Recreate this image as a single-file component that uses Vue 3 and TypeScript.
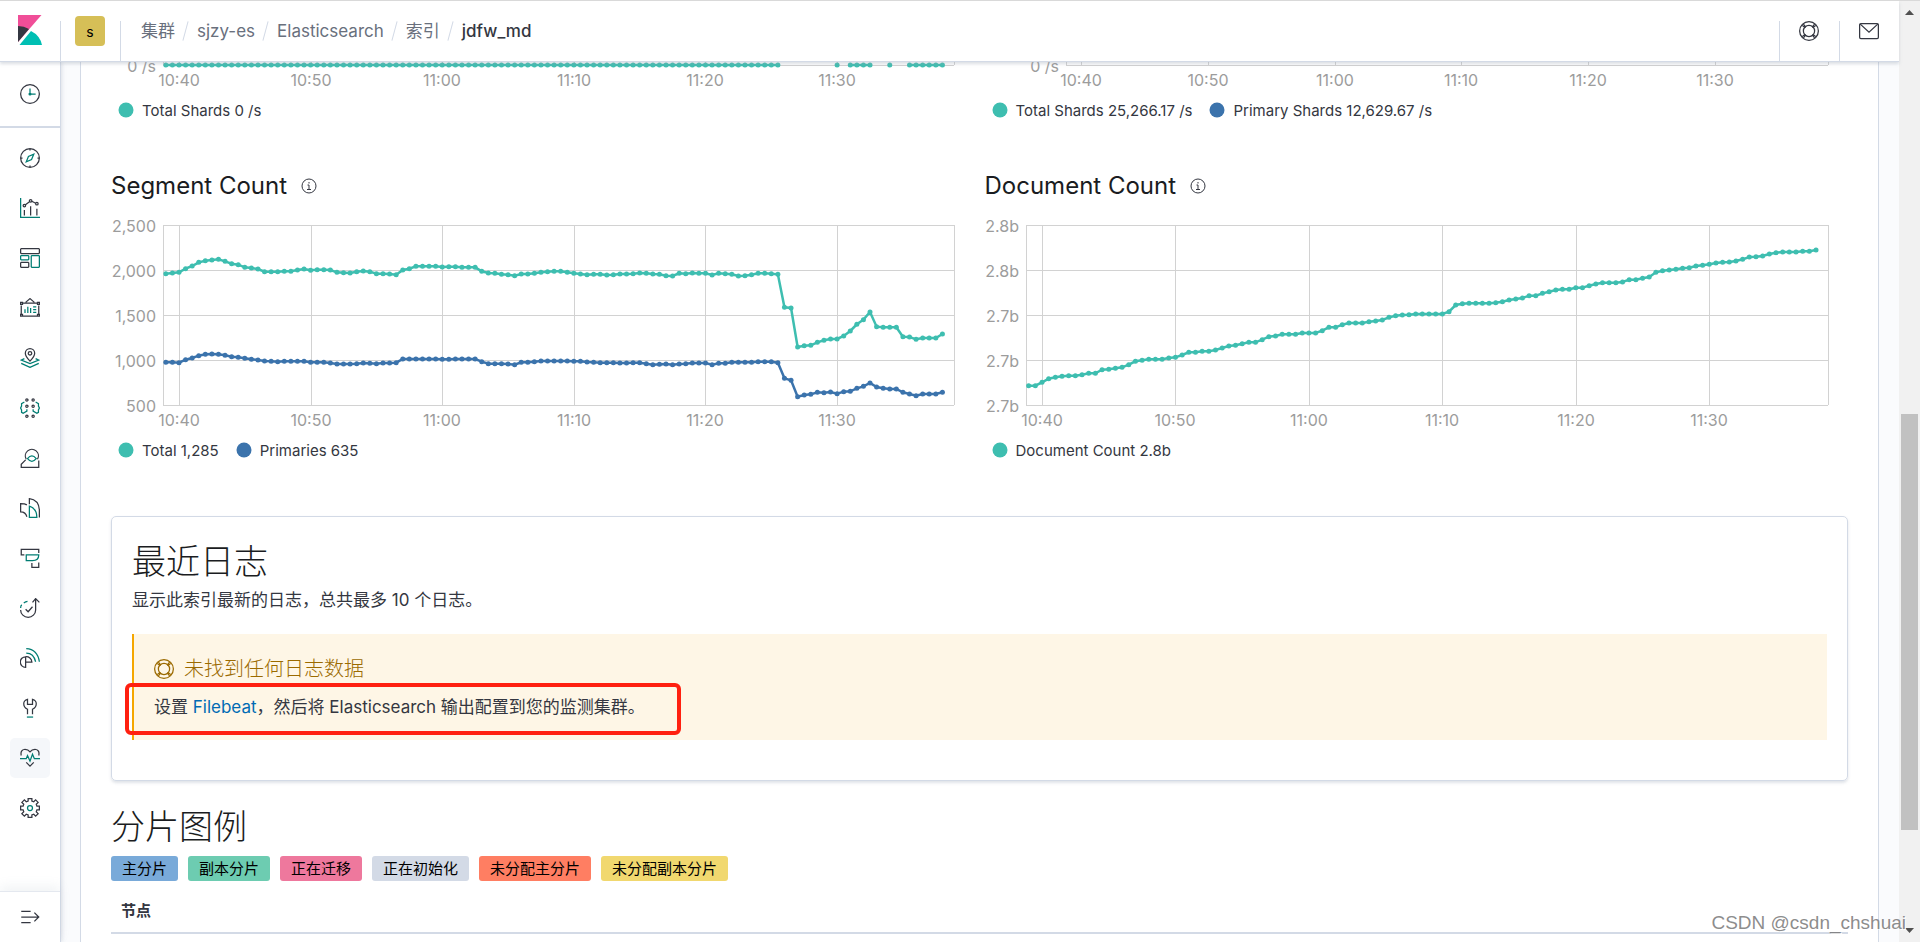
<script setup lang="ts">
import { computed, onBeforeUnmount, onMounted, ref } from 'vue'

interface Series {
  label: string
  color: string
  levels: (number | null)[]
}
interface Chart {
  id: string
  title?: string
  gutter: number
  plotHeight: number
  yLabels: string[]
  firstTick: number
  series: Series[]
}
interface NavIcon {
  name: string
  active?: boolean
  dark: string
  teal: string
}

const TEAL = '#3ebeb0'
const BLUE = '#3b73ac'
const SAMPLES = 119
const SCALE = 540
const TOP_PAD = 9
const BOTTOM_PAD = 31

const times = ['10:40', '10:50', '11:00', '11:10', '11:20', '11:30']

const idle: (number | null)[] = Array.from({ length: SAMPLES }, (_, i) =>
  i <= 93 || i === 102 || (i >= 104 && i <= 107) || i === 110 || i >= 113 ? 0 : null,
)

/* Levels run from 196 (top of the scale) down to 736 (bottom of the scale). */
const level = (values: number[]) => values.map((v) => 736 - v)

const total = level([
  342, 340, 338, 327, 319, 308, 303, 301, 299, 305, 312, 315, 323, 325, 328, 336, 336, 336, 335, 335,
  331, 328, 332, 330, 330, 331, 338, 339, 340, 336, 334, 336, 342, 342, 343, 345, 331, 327, 320, 320,
  320, 320, 322, 321, 321, 323, 323, 323, 335, 340, 341, 344, 345, 348, 343, 343, 341, 338, 336, 335,
  335, 338, 341, 343, 345, 344, 344, 346, 345, 343, 343, 342, 340, 341, 343, 344, 348, 349, 341, 342,
  340, 341, 341, 346, 341, 342, 344, 349, 348, 345, 341, 341, 342, 344, 443, 445, 562, 558, 557, 548,
  542, 538, 538, 529, 514, 494, 480, 457, 501, 503, 503, 503, 531, 532, 539, 535, 535, 535, 523,
])
const primaries = level([
  608, 608, 609, 600, 595, 588, 584, 583, 584, 587, 591, 593, 596, 599, 601, 604, 605, 606, 605, 605,
  605, 605, 608, 608, 608, 610, 613, 613, 613, 612, 610, 611, 612, 610, 610, 609, 598, 598, 598, 598,
  598, 598, 599, 599, 598, 598, 598, 598, 606, 612, 612, 612, 613, 615, 608, 608, 606, 604, 604, 604,
  604, 604, 605, 605, 607, 608, 609, 609, 609, 610, 610, 609, 609, 612, 615, 614, 613, 615, 613, 612,
  610, 610, 610, 615, 611, 611, 608, 608, 608, 608, 606, 606, 606, 609, 656, 662, 711, 706, 704, 698,
  699, 697, 702, 696, 695, 686, 680, 670, 682, 686, 688, 688, 698, 703, 708, 703, 703, 703, 698,
])
const documents = level([
  678, 678, 668, 657, 653, 650, 648, 648, 645, 641, 641, 630, 629, 626, 623, 615, 605, 602, 599, 599,
  599, 595, 593, 586, 578, 578, 575, 575, 571, 565, 559, 557, 552, 548, 548, 540, 531, 529, 524, 524,
  524, 520, 520, 520, 513, 503, 503, 495, 490, 490, 490, 486, 484, 481, 473, 468, 466, 465, 463, 463,
  463, 463, 463, 456, 436, 432, 431, 431, 431, 431, 429, 426, 421, 418, 415, 408, 408, 401, 396, 391,
  389, 389, 384, 384, 378, 373, 369, 369, 369, 367, 360, 360, 356, 352, 338, 333, 331, 329, 326, 324,
  319, 317, 314, 310, 308, 307, 304, 299, 292, 291, 289, 283, 279, 277, 277, 277, 275, 275, 271,
])

const charts: Chart[] = [
  {
    id: 'search-rate',
    gutter: 52,
    plotHeight: 0,
    yLabels: ['0 /s'],
    firstTick: 16,
    series: [{ label: 'Total Shards 0 /s', color: TEAL, levels: idle }],
  },
  {
    id: 'indexing-rate',
    gutter: 81,
    plotHeight: 0,
    yLabels: ['0 /s'],
    firstTick: 15,
    series: [
      { label: 'Total Shards 25,266.17 /s', color: TEAL, levels: [] },
      { label: 'Primary Shards 12,629.67 /s', color: BLUE, levels: [] },
    ],
  },
  {
    id: 'segments',
    title: 'Segment Count',
    gutter: 52,
    plotHeight: 180,
    yLabels: ['2,500', '2,000', '1,500', '1,000', '500'],
    firstTick: 16,
    series: [
      { label: 'Total 1,285', color: TEAL, levels: total },
      { label: 'Primaries 635', color: BLUE, levels: primaries },
    ],
  },
  {
    id: 'documents',
    title: 'Document Count',
    gutter: 41,
    plotHeight: 180,
    yLabels: ['2.8b', '2.8b', '2.7b', '2.7b', '2.7b'],
    firstTick: 16,
    series: [{ label: 'Document Count 2.8b', color: TEAL, levels: documents }],
  },
]

const grid = ref<HTMLElement | null>(null)
const columnWidth = ref(863)
let observer: ResizeObserver | undefined

function measure() {
  const first = grid.value?.firstElementChild
  if (first) columnWidth.value = first.clientWidth
}
onMounted(() => {
  measure()
  observer = new ResizeObserver(measure)
  if (grid.value) observer.observe(grid.value)
})
onBeforeUnmount(() => observer?.disconnect())

const drawn = computed(() =>
  charts.map((chart) => {
    const clipped = chart.plotHeight === 0
    const top = clipped ? 3 : TOP_PAD
    const bottom = top + chart.plotHeight
    const left = chart.gutter
    const right = columnWidth.value - 21
    const width = right - left
    const tickGap = width * 0.1664
    const step = tickGap / 20
    const start = left + chart.firstTick - step * 2
    const rows = chart.yLabels.length
    return {
      ...chart,
      left,
      right,
      bottom,
      frameTop: clipped ? -10 : top,
      height: bottom + BOTTOM_PAD,
      rows: chart.yLabels.map((text, i) => ({
        text,
        y: rows > 1 ? top + (chart.plotHeight * i) / (rows - 1) : bottom,
      })),
      ticks: times.map((text, i) => ({ text, x: Math.round(left + chart.firstTick + tickGap * i) })),
      lines: chart.series.map((s) => {
        const dots = s.levels.flatMap((v, i) =>
          v === null ? [] : [{ i, x: start + step * i, y: bottom - (v / SCALE) * chart.plotHeight }],
        )
        let previous = -2
        const path = dots
          .map((d) => {
            const cmd = d.i === previous + 1 ? 'L' : 'M'
            previous = d.i
            return `${cmd}${d.x.toFixed(2)} ${d.y.toFixed(2)}`
          })
          .join('')
        return { color: s.color, dots, path }
      }),
    }
  }),
)

const ring = (x: number, y: number, r: number) =>
  `M${x - r} ${y}a${r} ${r} 0 1 0 ${r * 2} 0a${r} ${r} 0 1 0 ${-r * 2} 0z`

const recent: NavIcon = {
  name: '最近查看',
  dark: ring(16, 16, 15),
  teal: 'M16 7v9h9' + ring(16, 16, 1.5),
}

const nav: NavIcon[] = [
  {
    name: 'Discover',
    dark: ring(16, 16, 15) + 'M16 1v3M16 28v3M1 16h3M28 16h3',
    teal: 'M22 10l-3.500 8.500L10 22l3.500-8.500z',
  },
  {
    name: 'Visualize',
    dark:
      ring(7, 12, 2) + ring(17, 4.5, 2) + ring(27, 9, 2) +
      'M8.700 10.700l6.500-4.800M19 5.300l6 3M7 19v9M17 13v15M27 17v11',
    teal: 'M1 0v31h31',
  },
  {
    name: 'Dashboard',
    dark: 'M2 1h28l1 1v6l-1 1H2L1 8V2zM2 23h11l1 1v6l-1 1H2l-1-1v-6z',
    teal: 'M2 12h11l1 1v5l-1 1H2l-1-1v-5zM19 12h11l1 1v17l-1 1H19l-1-1V13z',
  },
  {
    name: 'Canvas',
    dark:
      'M9 7l7-6 7 6M4 8h24M4 29h24M2 12v13M30 12v13M1 7h3v3H1zM28 7h3v3h-3zM1 26h3v3H1zM28 26h3v3h-3z',
    teal: 'M8 18v6M12.500 14v10M17 16v8M21 14h5M21 18.500h5M21 23h5',
  },
  {
    name: 'Maps',
    dark: 'M16 21c-4-4-7.500-8-7.500-12.500a7.500 7.500 0 0 1 15 0C23.500 13 20 17 16 21z' + ring(16, 8.5, 2.8),
    teal: 'M7 17l-5 2.500L16 25l14-5.500L25 17M2 24.500L16 31l14-6.500',
  },
  {
    name: 'Machine Learning',
    dark:
      ring(11, 3, 1.8) + ring(21, 3, 1.8) + ring(11, 13, 1.8) + ring(21, 13, 1.8) +
      ring(11, 29, 1.8) + ring(21, 29, 1.8),
    teal: 'M7 6.500L2.500 9v4L1 16l1.500 3v4L5 24.500 11 21v-3M25 6.500L29.500 9v4L31 16l-1.500 3v4L27 24.500 21 21v-3',
  },
  {
    name: 'Metrics',
    dark: 'M10 18a10.500 10.500 0 1 1 18 0M9 19L2 26v5h28V20',
    teal: 'M12 17q7-8.500 14 0q-7 8.500-14 0z',
  },
  {
    name: 'Logs',
    dark: 'M15 10V1q15 2 16 18v12M11 11Q8 9 1 9v13q8 0 10 8',
    teal: 'M15 13v18h12q0-14-12-18z',
  },
  {
    name: 'APM',
    dark: 'M7 11H2V2h28v6M19 24v7h11v-8',
    teal: 'M10 11h20q0 9-10 9H10z',
  },
  {
    name: 'Uptime',
    dark: 'M1 19a12 12 0 0 0 24 0V2M20 7l5-6 6 6M9 18l4 4 7-8',
    teal: 'M1 16q0-4 2-5M6 8q3-2 6-2.500',
  },
  {
    name: 'SIEM',
    dark: 'M9 14a8.500 8.500 0 0 0 0 17V14a9 9 0 0 1 10 8.500H9',
    teal: 'M10 8q12 0 15 14M10 1q18 1 21 21',
  },
  {
    name: 'Dev Tools',
    dark: 'M12 26v-8Q6 15 6 9q0-5 6-7v8h8V2q6 2 6 7 0 6-6 9v8',
    teal: 'M11 30.500h10',
  },
  {
    name: 'Stack Monitoring',
    active: true,
    dark: 'M2 12Q0 3 8 2q5 0 8 4 3-4 8-4 8 1 6 10M10 23l6 6 6-6',
    teal: 'M0 17h10l2-5 4 9 4-11 3 7h9',
  },
  {
    name: 'Management',
    dark:
      'M13 1h6v4l3 1 3-3 4 4-3 3 1 3h4v6h-4l-1 3 3 3-4 4-3-3-3 1v4h-6v-4l-3-1-3 3-4-4 3-3-1-3H1v-6h4l1-3-3-3 4-4 3 3 3-1z',
    teal: ring(16, 16, 4),
  },
]

const crumbs = ['集群', 'sjzy-es', 'Elasticsearch', '索引', 'jdfw_md']

const badges = [
  { text: '主分片', kind: 'primary' },
  { text: '副本分片', kind: 'replica' },
  { text: '正在迁移', kind: 'relocating' },
  { text: '正在初始化', kind: 'initializing' },
  { text: '未分配主分片', kind: 'unassigned-primary' },
  { text: '未分配副本分片', kind: 'unassigned-replica' },
]
</script>

<template>
  <div class="app">
    <div class="shell">
      <header class="header">
        <a class="logo" href="#" aria-label="Kibana">
          <svg width="24" height="30" viewBox="0 0 24 30">
            <path fill="#f04e98" d="M0 0v27L23.500 0z" />
            <path fill="#343741" d="M0 11v16l11-13Q6 11 0 11z" />
            <path fill="#00bfb3" d="M13 16L1.500 30H24Q22 20.500 13 16z" />
          </svg>
        </a>
        <div class="cell">
          <button class="space" type="button">s</button>
        </div>
        <nav class="crumbs" aria-label="breadcrumb">
          <template v-for="(crumb, i) in crumbs" :key="crumb">
            <span v-if="i > 0" class="slash"></span>
            <a v-if="i < crumbs.length - 1" href="#">{{ crumb }}</a>
            <span v-else class="current">{{ crumb }}</span>
          </template>
        </nav>
        <button class="cell" type="button" aria-label="Help">
          <svg width="20" height="20" viewBox="0 0 16 16" class="help">
            <circle cx="8" cy="8" r="7.5" />
            <circle cx="8" cy="8" r="4.500" />
            <path d="M3.500 2.500l2 2.500M2.500 3.500L5 5.500M12.500 2.500l-2 2.500M13.500 3.500L11 5.500M3.500 13.500l2-2.500M2.500 12.500L5 10.500M12.500 13.500l-2-2.500M13.500 12.500L11 10.500" />
          </svg>
        </button>
        <button class="cell" type="button" aria-label="Newsfeed">
          <svg width="20" height="20" viewBox="0 0 16 16" class="help">
            <rect x=".5" y="2" width="15" height="12" rx="1" />
            <path d="M1 2.500l7 6.500 7-6.500" />
          </svg>
        </button>
      </header>

      <div class="body">
        <aside class="side">
          <div class="recent">
            <button type="button" class="nav-item" :aria-label="recent.name">
              <svg width="20" height="20" viewBox="0 0 32 32">
                <path class="dark" :d="recent.dark" />
                <path class="teal" :d="recent.teal" />
              </svg>
            </button>
          </div>
          <nav class="apps">
            <a
              v-for="item in nav"
              :key="item.name"
              href="#"
              :class="['nav-item', { active: item.active }]"
              :aria-label="item.name"
            >
              <svg width="20" height="20" viewBox="0 0 32 32">
                <path class="dark" :d="item.dark" />
                <path class="teal" :d="item.teal" />
              </svg>
            </a>
          </nav>
          <div class="collapse">
            <button type="button" class="nav-item" aria-label="Expand">
              <svg width="20" height="20" viewBox="0 0 32 32">
                <path class="dark" d="M2 7h15M2 16h27M2 25h15M23 9l7 7-7 7" />
              </svg>
            </button>
          </div>
        </aside>

        <main class="page">
          <div class="content">
            <section ref="grid" class="charts">
              <div v-for="chart in drawn" :key="chart.id" class="chart">
                <h2 v-if="chart.title" class="chart-title">
                  {{ chart.title }}
                  <svg width="16" height="16" viewBox="0 0 16 16" class="info">
                    <circle cx="8" cy="8" r="7" />
                    <path d="M6.500 7H8v4.500M6 11.500h4M8 4v1.500" />
                  </svg>
                </h2>
                <svg class="plot" width="100%" :height="chart.height">
                  <g class="grid">
                    <line
                      v-for="(row, i) in chart.rows"
                      :key="'r' + i"
                      :x1="chart.left"
                      :x2="chart.right"
                      :y1="row.y"
                      :y2="row.y"
                    />
                    <line
                      v-for="tick in chart.ticks"
                      :key="tick.text"
                      :x1="tick.x"
                      :x2="tick.x"
                      :y1="chart.frameTop"
                      :y2="chart.bottom"
                    />
                    <line :x1="chart.left" :x2="chart.left" :y1="chart.frameTop" :y2="chart.bottom" />
                    <line :x1="chart.right" :x2="chart.right" :y1="chart.frameTop" :y2="chart.bottom" />
                  </g>
                  <text
                    v-for="(row, i) in chart.rows"
                    :key="'y' + i"
                    class="axis end"
                    :x="chart.left - 7"
                    :y="row.y + 7"
                  >{{ row.text }}</text>
                  <text
                    v-for="tick in chart.ticks"
                    :key="'x' + tick.text"
                    class="axis middle"
                    :x="tick.x"
                    :y="chart.bottom + 21"
                  >{{ tick.text }}</text>
                  <g v-for="line in chart.lines" :key="line.color">
                    <path class="line" :d="line.path" :stroke="line.color" />
                    <circle
                      v-for="dot in line.dots"
                      :key="dot.i"
                      :cx="dot.x"
                      :cy="dot.y"
                      r="2.5"
                      :fill="line.color"
                    />
                  </g>
                </svg>
                <div class="legend">
                  <button v-for="s in chart.series" :key="s.label" type="button" class="legend-item">
                    <svg width="16" height="16" viewBox="0 0 16 16">
                      <circle cx="8" cy="8" r="7.500" :fill="s.color" />
                    </svg>
                    {{ s.label }}
                  </button>
                </div>
              </div>
            </section>

            <section class="logs">
              <h1 class="heading">最近日志</h1>
              <p class="text">显示此索引最新的日志，总共最多 10 个日志。</p>
              <div class="callout">
                <h3 class="callout-title">
                  <svg width="20" height="20" viewBox="0 0 16 16" class="help">
                    <circle cx="8" cy="8" r="7.500" />
                    <circle cx="8" cy="8" r="4.500" />
                    <path d="M3.500 2.500l2 2.500M2.500 3.500L5 5.500M12.500 2.500l-2 2.500M13.500 3.500L11 5.500M3.500 13.500l2-2.500M2.500 12.500L5 10.500M12.500 13.500l-2-2.500M13.500 12.500L11 10.500" />
                  </svg>
                  未找到任何日志数据
                </h3>
                <p class="text">设置 <a href="#">Filebeat</a>，然后将 Elasticsearch 输出配置到您的监测集群。</p>
                <span class="highlight"></span>
              </div>
            </section>

            <section class="shards">
              <h1 class="heading">分片图例</h1>
              <div class="badges">
                <span v-for="b in badges" :key="b.kind" :class="['badge', b.kind]">{{ b.text }}</span>
              </div>
              <table class="nodes">
                <thead>
                  <tr><th scope="col">节点</th></tr>
                </thead>
              </table>
            </section>
          </div>
        </main>
      </div>
    </div>

    <div class="scrollbar" aria-hidden="true">
      <svg width="9" height="5" viewBox="0 0 9 5"><path d="M4.500 0L9 5H0z" /></svg>
      <div class="track"><div class="thumb"></div></div>
      <svg width="9" height="5" viewBox="0 0 9 5"><path d="M0 0h9L4.500 5z" /></svg>
    </div>
    <span class="watermark">CSDN @csdn_chshuai</span>
  </div>
</template>

<style>
body {
  margin: 0;
}
</style>

<style scoped>
.app {
  position: relative;
  display: flex;
  height: 100vh;
  overflow: hidden;
  box-sizing: border-box;
  border-top: 1px solid #d9d9d9;
  background: #fafbfd;
  color: #343741;
  font-family: Inter, 'Noto Sans CJK SC', sans-serif;
  font-size: 17px;
}
.app * {
  box-sizing: border-box;
}
button {
  padding: 0;
  border: 0;
  background: none;
  color: inherit;
  font: inherit;
  cursor: pointer;
}
a {
  color: #006bb4;
  text-decoration: none;
}
h1,
h2,
h3,
p {
  margin: 0;
  font-weight: 400;
}
svg {
  display: block;
  flex: none;
}
.shell {
  flex: 1;
  min-width: 0;
  display: flex;
  flex-direction: column;
}

.header {
  position: relative;
  z-index: 2;
  flex: none;
  display: flex;
  align-items: stretch;
  height: 61px;
  background: #fff;
  border-bottom: 1px solid #d3dae6;
  box-shadow: 0 2px 3px rgba(152, 162, 179, 0.35);
}
.logo {
  width: 60px;
  padding: 14px 18px;
}
.cell {
  width: 60px;
  display: flex;
  align-items: center;
  justify-content: center;
  background: linear-gradient(#d3dae6, #d3dae6) no-repeat 0 100% / 1px 40px;
}
.space {
  width: 30px;
  height: 30px;
  border-radius: 4px;
  background: #d6bf57;
  color: #000;
  font-size: 14px;
}
.crumbs {
  flex: 1;
  display: flex;
  align-items: baseline;
  padding: 17px 0 0 21px;
  line-height: 26px;
  background: linear-gradient(#d3dae6, #d3dae6) no-repeat 0 100% / 1px 40px;
}
.crumbs a {
  color: #69707d;
}
.crumbs .current {
  font-weight: 500;
}
.slash {
  align-self: flex-start;
  width: 1px;
  height: 20px;
  margin: 3px 11px 0 10px;
  background: #d3dae6;
  transform: rotate(15deg);
}
.help {
  fill: none;
  stroke: currentColor;
  stroke-width: 1;
}

.body {
  flex: 1;
  min-height: 0;
  display: flex;
}
.side {
  flex: none;
  display: flex;
  flex-direction: column;
  width: 61px;
  background: #fff;
  border-right: 1px solid #d3dae6;
  box-shadow: 1px 0 4px rgba(152, 162, 179, 0.3);
  z-index: 1;
}
.recent {
  padding: 12px 10px;
  border-bottom: 2px solid #d3dae6;
}
.apps {
  flex: 1;
  display: flex;
  flex-direction: column;
  gap: 10px;
  padding: 10px;
}
.nav-item {
  display: flex;
  align-items: center;
  justify-content: center;
  width: 40px;
  height: 40px;
  border-radius: 5px;
}
.nav-item.active {
  background: #f5f7fa;
}
.dark,
.teal {
  fill: none;
  stroke: #343741;
  stroke-width: 2;
}
.teal {
  stroke: #017d73;
}
.collapse {
  padding: 5px 10px;
  border-top: 1px solid #e4e8ef;
  box-shadow: 0 -5px 10px rgba(152, 162, 179, 0.12);
}

.page {
  flex: 1;
  min-width: 0;
  padding: 0 20px 0 19px;
}
.content {
  min-height: 100%;
  padding: 0 30px;
  background: #fff;
  border: solid #d3dae6;
  border-width: 0 1px;
}
.charts {
  display: grid;
  grid-template-columns: minmax(0, 1fr) minmax(0, 1fr);
  gap: 47px 10px;
}
.chart-title {
  display: flex;
  align-items: center;
  gap: 14px;
  margin-bottom: 15px;
  color: #1a1c21;
  font-size: 24px;
  line-height: 30px;
}
.info {
  fill: none;
  stroke: #343741;
  stroke-width: 1;
}
.plot {
  overflow: hidden;
}
.grid line {
  stroke: #d2d2d2;
  stroke-width: 1;
  shape-rendering: crispEdges;
}
.axis {
  fill: #9c9c9c;
  font-size: 16px;
}
.end {
  text-anchor: end;
}
.middle {
  text-anchor: middle;
}
.line {
  fill: none;
  stroke-width: 2.5px;
}
.legend {
  display: flex;
  gap: 17px;
  height: 28px;
  padding-left: 7px;
}
.legend-item {
  display: flex;
  align-items: center;
  gap: 8px;
  font-size: 15px;
}

.heading {
  color: #1a1c21;
  font-size: 34px;
  font-weight: 300;
  line-height: 50px;
}
.text {
  line-height: 26px;
}
.logs {
  margin-top: 52px;
  padding: 20px 20px 40px;
  border: 1px solid #d3dae6;
  border-radius: 5px;
  box-shadow: 0 2px 3px rgba(152, 162, 179, 0.3);
}
.callout {
  position: relative;
  margin-top: 21px;
  padding: 20px;
  border-left: 2px solid #f5a700;
  background: #fef6e6;
}
.callout-title {
  display: flex;
  align-items: center;
  gap: 10px;
  margin-bottom: 10px;
  color: #9b6a00;
  font-size: 20px;
  font-weight: 300;
  line-height: 30px;
}
.highlight {
  position: absolute;
  left: -9px;
  top: 49px;
  width: 556px;
  height: 52px;
  border: 4px solid #ff2010;
  border-radius: 6px;
}
.shards {
  margin-top: 21px;
}
.badges {
  display: flex;
  gap: 10px;
  margin: 4px 0 10px;
}
.badge {
  padding: 0 11px;
  border-radius: 3px;
  color: #000;
  font-size: 15px;
  line-height: 25px;
}
.primary {
  background: #79aad9;
}
.replica {
  background: #6dccb1;
}
.relocating {
  background: #ee789d;
}
.initializing {
  background: #d3dae6;
}
.unassigned-primary {
  background: #ff7e62;
}
.unassigned-replica {
  background: #f1d86f;
}
.nodes {
  width: 100%;
  border-collapse: collapse;
}
.nodes th {
  height: 42px;
  padding: 0 10px 4px;
  border-bottom: 2px solid #d3dae6;
  font-size: 15px;
  font-weight: 600;
  text-align: left;
}

.scrollbar {
  flex: none;
  display: flex;
  flex-direction: column;
  align-items: center;
  width: 21px;
  padding: 9px 0;
  background: #f1f1f1;
  fill: #505050;
}
.track {
  flex: 1;
  display: flex;
  flex-direction: column;
  align-self: stretch;
  padding: 4px 2px;
}
.thumb {
  height: 46%;
  margin-top: auto;
  margin-bottom: 94px;
  background: #c1c1c1;
}
.watermark {
  position: absolute;
  right: 14px;
  bottom: 6px;
  color: rgba(110, 110, 110, 0.8);
  font-family: 'Liberation Sans', Arial, sans-serif;
  font-size: 19px;
  line-height: 26px;
  text-shadow: 1px 1px 0 #fff;
}
</style>
